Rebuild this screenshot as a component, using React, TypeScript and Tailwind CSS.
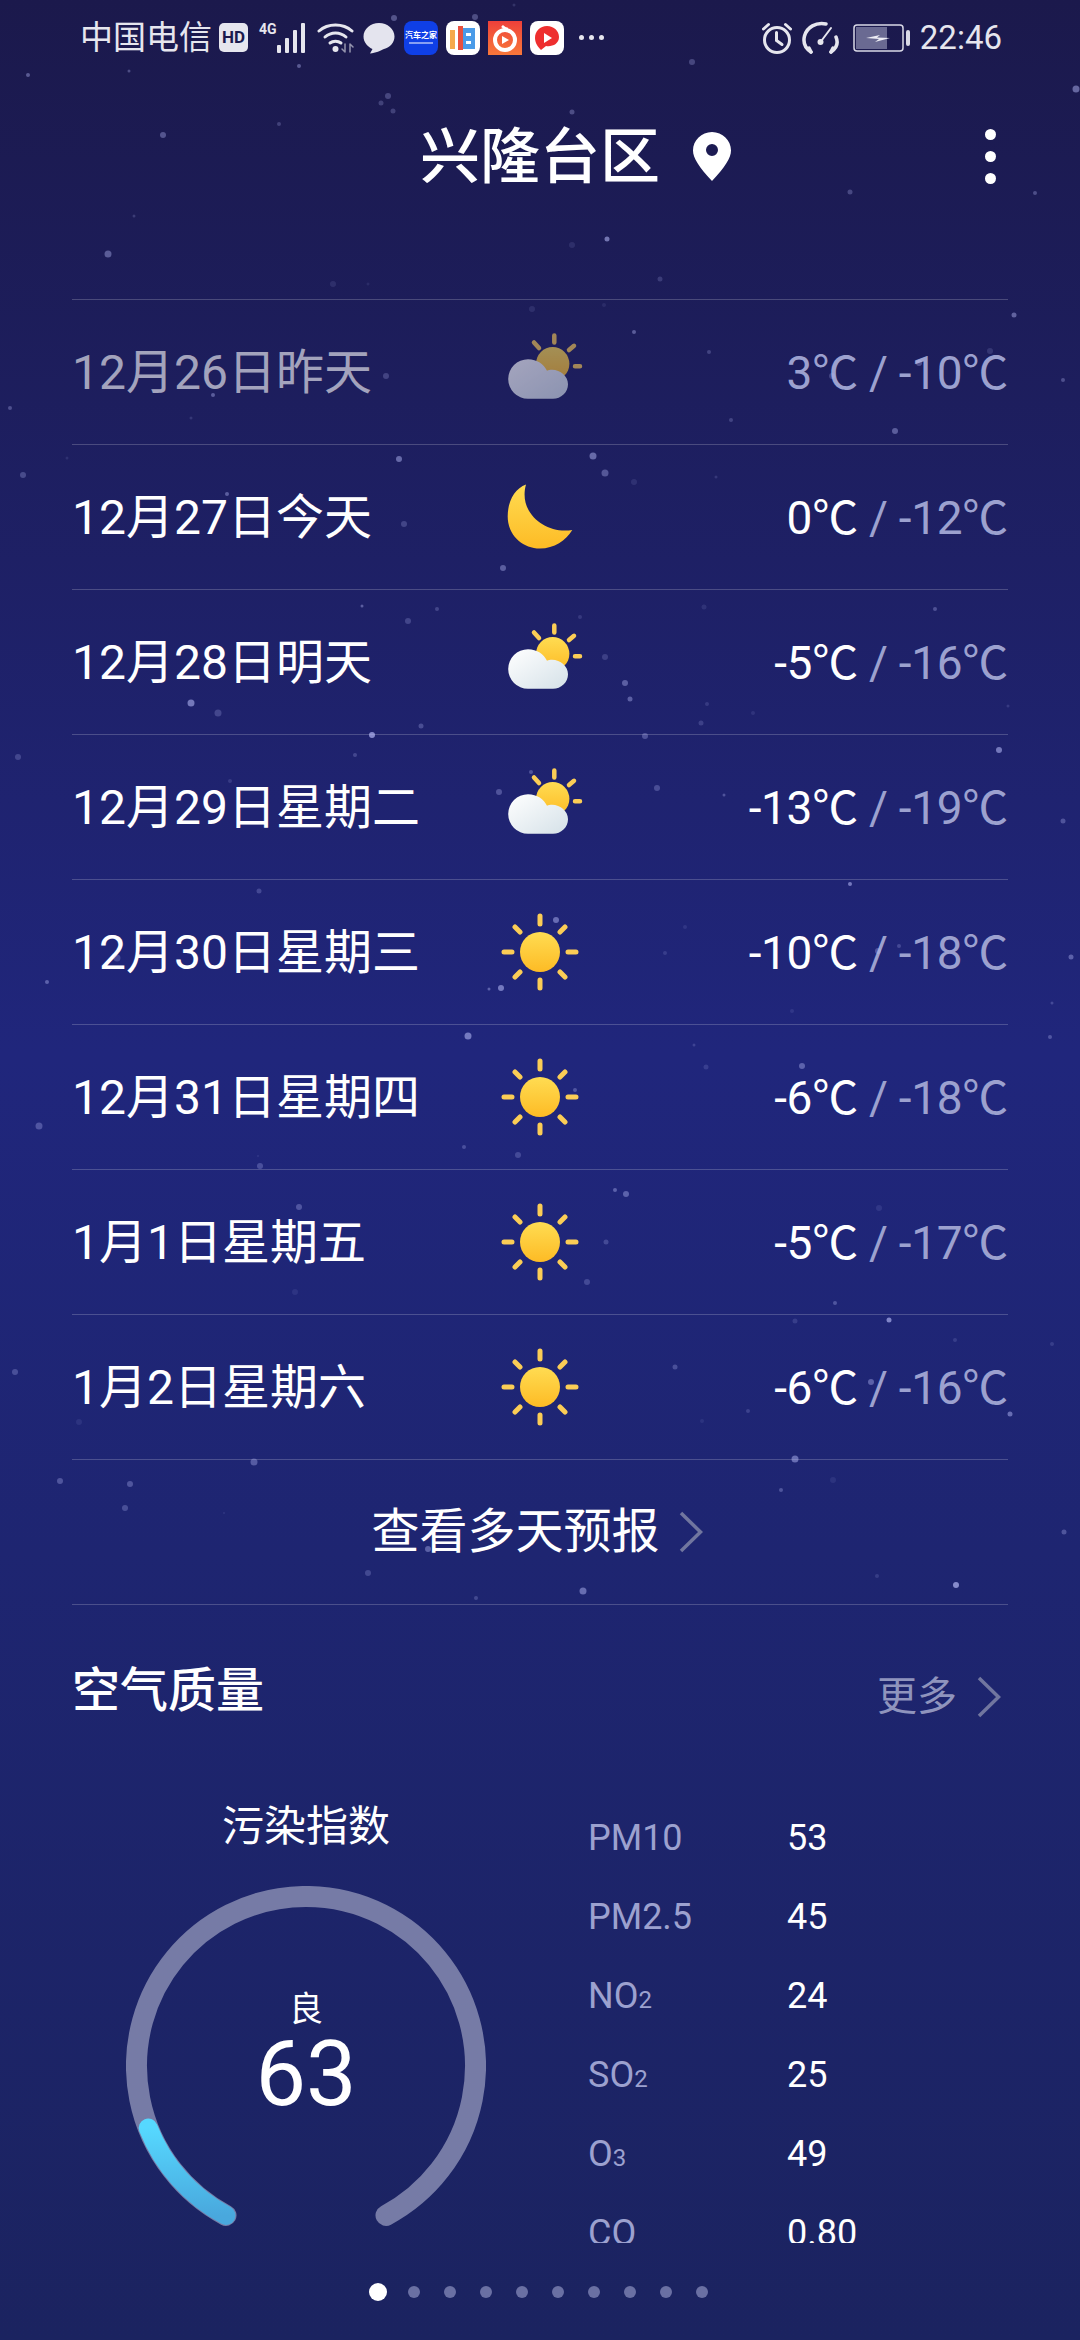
import React from "react"

// x, y, radius, opacity
const stars: [number, number, number, number][] = [
  [514,5,1.5,.2],[394,18,3,.45],[475,17,3,.4],[28,75,2,.5],[129,71,1.5,.4],[299,66,2,.5],[692,62,3,.35],[1076,89,3.5,.6],
  [388,96,3,.35],[381,103,2.5,.3],[393,111,2.5,.3],[572,112,2.5,.4],[279,124,2,.3],[163,135,3,.45],[850,192,2.5,.35],[1035,193,2,.4],
  [134,216,1.5,.25],[607,239,2.5,.7],[572,245,3,.15],[108,254,3.5,.5],[660,279,2.5,.25],[333,284,3,.15],[368,284,1.5,.12],[532,309,3,.15],
  [604,305,2,.12],[1014,315,2.5,.55],[634,332,2,.5],[709,352,2,.3],[990,351,3,.2],[386,376,3,.3],[1063,380,2,.4],[832,376,3,.3],
  [919,363,3,.4],[213,395,2,.5],[10,408,2,.4],[191,418,1.5,.2],[731,420,2,.3],[895,431,3,.5],[399,459,3,.6],[593,456,3.5,.6],
  [605,473,3.5,.45],[23,475,3,.35],[716,477,1.5,.2],[634,482,3,.15],[67,458,1.5,.15],[227,494,2,.5],[404,524,3,.3],[503,568,3,.5],
  [362,606,1.5,.5],[437,609,2,.3],[408,621,3,.3],[704,607,2.5,.15],[580,617,2,.2],[935,609,2,.4],[605,657,3,.25],[625,683,3,.5],
  [630,699,2.5,.5],[191,703,3.5,.7],[218,713,3.5,.3],[707,704,2,.2],[753,713,2,.15],[1008,706,1.5,.2],[421,726,2.5,.35],[701,723,2.5,.25],
  [372,735,3,.85],[645,736,3,.4],[18,757,3,.3],[355,755,2,.3],[999,750,3,.7],[230,781,2,.2],[531,772,2,.4],[499,792,3,.4],
  [657,788,3,.35],[724,795,1.5,.4],[1063,821,2.5,.4],[259,891,2.5,.3],[850,884,2,.7],[556,920,3,.6],[685,927,2,.15],[117,958,3.5,.3],
  [665,953,2,.2],[878,951,3,.4],[899,946,2,.3],[1071,957,2.5,.5],[47,982,2,.5],[489,989,1.5,.5],[501,988,3,.7],[1052,1003,1.5,.3],
  [792,1011,2,.15],[468,1036,3.5,.7],[1050,1037,2,.4],[694,1045,1.5,.25],[706,1067,2.5,.2],[802,1066,3,.5],[575,1090,2,.4],[39,1126,3.5,.4],
  [464,1147,2,.35],[518,1155,3,.3],[260,1166,3,.35],[258,1156,1,.15],[615,1190,2,.5],[626,1194,3,.5],[299,1207,3,.4],[879,1208,3,.15],
  [606,1242,2.5,.3],[587,1282,3,.3],[295,1292,3,.12],[835,1303,2,.4],[889,1320,2.5,.8],[795,1321,2.5,.2],[955,1340,2,.2],[1052,1344,2,.2],
  [675,1367,2.5,.35],[15,1372,3,.35],[871,1382,3,.5],[748,1411,2,.25],[1010,1414,2.5,.6],[79,1422,3,.12],[702,1421,2,.12],[254,1462,3.5,.45],
  [795,1459,3.5,.6],[60,1481,3,.4],[130,1484,3,.4],[125,1508,3,.35],[781,1490,2,.4],[833,1480,3,.12],[224,1513,1,.15],[428,1549,3,.5],
  [368,1573,3,.3],[583,1591,3.5,.6],[956,1585,3,.85],[877,1576,2,.2],[476,1598,2,.3],[1064,1532,2.5,.4],
]

type Weather = "cloudy" | "moon" | "sun"

const days: { date: string; icon: Weather; high: string; low: string; past?: boolean }[] = [
  { date: "12月26日昨天", icon: "cloudy", high: "3℃", low: "-10℃", past: true },
  { date: "12月27日今天", icon: "moon", high: "0℃", low: "-12℃" },
  { date: "12月28日明天", icon: "cloudy", high: "-5℃", low: "-16℃" },
  { date: "12月29日星期二", icon: "cloudy", high: "-13℃", low: "-19℃" },
  { date: "12月30日星期三", icon: "sun", high: "-10℃", low: "-18℃" },
  { date: "12月31日星期四", icon: "sun", high: "-6℃", low: "-18℃" },
  { date: "1月1日星期五", icon: "sun", high: "-5℃", low: "-17℃" },
  { date: "1月2日星期六", icon: "sun", high: "-6℃", low: "-16℃" },
]

const air: { name: string; sub?: string; value: string }[] = [
  { name: "PM10", value: "53" },
  { name: "PM2.5", value: "45" },
  { name: "NO", sub: "2", value: "24" },
  { name: "SO", sub: "2", value: "25" },
  { name: "O", sub: "3", value: "49" },
  { name: "CO", value: "0.80" },
]

const WeatherIcon = ({ type, id }: { type: Weather; id: string }) => (
  <svg width="100" height="100" viewBox="0 0 100 100">
    <defs>
      <linearGradient id={`sun-${id}`} x1="0" y1="0" x2="0" y2="1">
        <stop offset="0" stopColor="#ffdc52" />
        <stop offset="1" stopColor="#fdbb25" />
      </linearGradient>
      <linearGradient id={`cloud-${id}`} x1="0" y1="0" x2="1" y2="1">
        <stop offset="0" stopColor="#ffffff" />
        <stop offset="1" stopColor="#d5e1e8" />
      </linearGradient>
    </defs>
    {type === "sun" && (
      <g>
        <g stroke="#fbcd56" strokeWidth="5" strokeLinecap="round">
          <path d="M50 14v8M50 78v8M14 50h8M78 50h8M25 25l5 5M75 25l-5 5M25 75l5-5M75 75l-5-5" />
        </g>
        <circle cx="50" cy="50" r="20" fill={`url(#sun-${id})`} />
      </g>
    )}
    {type === "moon" && (
      <path
        d="M36 17.5C25 21.5 17.7 33.5 17.7 49.5C17.7 67.5 32 81.5 50 81.5C64 81.5 76 73.5 82.3 63C55 67.5 28 45.5 36 17.5Z"
        fill={`url(#sun-${id})`}
      />
    )}
    {type === "cloudy" && (
      <g>
        <g stroke="#fbcd56" strokeWidth="4.5" strokeLinecap="round">
          <path d="M64.300 13.500v7M44 20.500l5 5.500M79 28l5-4.200M85 44.200h5" />
        </g>
        <circle cx="62.700" cy="41.800" r="16.700" fill={`url(#sun-${id})`} />
        <path
          d="M38 76.800a19.800 19.800 0 0 1 0-39.600c9 0 16 5 19 11.500c1.500-.6 3-1 5-1c8.500 0 16 6.500 16 14.500c0 8-7 14.600-15 14.600z"
          fill={`url(#cloud-${id})`}
        />
      </g>
    )}
  </svg>
)

const Chevron = () => (
  <svg width="24" height="42" viewBox="0 0 24 42" fill="none" stroke="#71769f" strokeWidth="3.5">
    <path d="M2 2L21.500 21L2 40" />
  </svg>
)

const StatusLeft = () => (
  <div className="flex items-center">
    <span className="text-[33px] leading-none">中国电信</span>
    <span className="ml-[7px] flex h-[29px] w-[29px] items-center justify-center rounded-[5px] bg-[#e6e6ee] text-[17px] font-bold leading-none text-[#1b1a4d]">
      HD
    </span>
    <div className="relative ml-[11px] h-[34px] w-[49px]">
      <span className="absolute left-0 top-[1px] text-[14px] font-bold leading-none">4G</span>
      <svg className="absolute left-0 top-0" width="49" height="34" viewBox="0 0 49 34" fill="#e6e6ee">
        <rect x="18" y="24" width="4" height="8" rx="1" />
        <rect x="26" y="17" width="4" height="15" rx="1" />
        <rect x="34" y="9" width="4" height="23" rx="1" />
        <rect x="42" y="2" width="4" height="30" rx="1" />
      </svg>
    </div>
    <svg className="ml-[9px]" width="37" height="32" viewBox="0 0 37 32" fill="none" stroke="#e6e6ee" strokeWidth="3" strokeLinecap="round">
      <path d="M2 9C11 1 26 1 35 9" />
      <path d="M8 15C14 9.500 23 9.500 29 15" />
      <path d="M13 21C16 18.500 21 18.500 24 21" />
      <circle cx="18.500" cy="27" r="3" fill="#e6e6ee" stroke="none" />
      <path d="M28 22v8M28 30l-3-3" strokeWidth="1.500" opacity=".6" />
      <path d="M33 30v-8M33 22l3 3" strokeWidth="1.500" opacity=".6" />
    </svg>
    <svg className="ml-[9px]" width="32" height="32" viewBox="0 0 32 32" fill="#e4e4ee">
      <path d="M16 1C7.500 1 0.500 7 0.500 14.500C0.500 20.500 5 25 9.500 27L7 31.500C12.500 31 18 28.500 21 27C27 25.500 31.500 20.500 31.500 14.500C31.500 7 24.500 1 16 1Z" />
    </svg>
    <div className="ml-[9px] flex h-[34px] w-[34px] flex-col items-center justify-center rounded-[8px] bg-[#0f3fe6]">
      <span className="text-[8px] font-bold leading-[10px] text-white">汽车之家</span>
      <span className="mt-[1px] h-[2px] w-[24px] bg-white/50" />
    </div>
    <div className="ml-[8px] h-[34px] w-[34px] rounded-[8px] bg-white">
      <svg width="34" height="34" viewBox="0 0 34 34">
        <rect x="4" y="9" width="5" height="19" fill="#f5a94c" />
        <rect x="12" y="5" width="5" height="24" fill="#e8503f" />
        <rect x="17" y="7" width="12" height="21" fill="#4a9be8" />
        <rect x="20" y="12" width="5" height="3" fill="#fff" />
        <rect x="20" y="20" width="5" height="3" fill="#fff" />
      </svg>
    </div>
    <div className="ml-[8px] h-[34px] w-[34px] bg-gradient-to-b from-[#ee3f3a] to-[#f8773a]">
      <svg width="34" height="34" viewBox="0 0 34 34">
        <circle cx="17" cy="19" r="10" fill="none" stroke="#fff" strokeWidth="4" />
        <path d="M14 15l7 4-7 4z" fill="#fff" />
        <path d="M14 5c2 2 4 3 6 3" stroke="#fff" strokeWidth="2.500" fill="none" />
      </svg>
    </div>
    <div className="ml-[8px] h-[34px] w-[34px] rounded-[8px] bg-white">
      <svg width="34" height="34" viewBox="0 0 34 34">
        <path d="M17 5C10 5 5 10 5 17C5 22 8 26 11 29L16 25C22 26 29 23 29 16C29 10 24 5 17 5Z" fill="#ee2f2f" />
        <path d="M14 12l8 5-8 5z" fill="#fff" />
      </svg>
    </div>
    <div className="ml-[15px] flex gap-[5px]">
      <span className="h-[5px] w-[5px] rounded-full bg-[#e6e6ee]" />
      <span className="h-[5px] w-[5px] rounded-full bg-[#e6e6ee]" />
      <span className="h-[5px] w-[5px] rounded-full bg-[#e6e6ee]" />
    </div>
  </div>
)

const StatusRight = () => (
  <div className="flex items-center">
    <svg width="30" height="32" viewBox="0 0 30 32" fill="none" stroke="#e6e6ee" strokeWidth="3" strokeLinecap="round">
      <circle cx="15" cy="18" r="12.500" />
      <path d="M14.500 10.500v8l5.500 4" />
      <path d="M1.500 7l5-4.500M28.500 7l-5-4.500" />
    </svg>
    <svg className="ml-[10px]" width="38" height="34" viewBox="0 0 38 34" fill="none" stroke="#e6e6ee" strokeWidth="3.500" strokeLinecap="round">
      <path d="M9 31C3 27 1 21 2.500 15C5 6 14 1 24 3" />
      <path d="M34 16C36.500 22 35 27 29 31" />
      <path d="M29 7L20 19" strokeWidth="2" />
      <circle cx="18.500" cy="21" r="3" fill="#e6e6ee" stroke="none" />
      <path d="M9 31l-2-4M29 31l2-4" />
    </svg>
    <svg className="ml-[13px]" width="57" height="28" viewBox="0 0 57 28">
      <rect x="1" y="1" width="49" height="26" rx="3" fill="none" stroke="#d9d9e6" strokeWidth="1.500" />
      <rect x="3" y="3" width="31" height="22" fill="#6a6a92" />
      <path d="M13 14L27 11L24 13.500L37 14L22 18L26 15z" fill="#ececf4" />
      <rect x="53" y="6" width="4" height="16" rx="2" fill="#d9d9e6" />
    </svg>
    <span className="ml-[10px] text-[33px] leading-none">22:46</span>
  </div>
)

const Gauge = () => (
  <div className="relative h-[360px] w-[360px]">
    <svg width="360" height="360" viewBox="0 0 360 360" fill="none" strokeLinecap="round" strokeWidth="21">
      <defs>
        <linearGradient id="gauge-blue" x1="0" y1="0" x2="0" y2="1">
          <stop offset="0" stopColor="#56d8ff" />
          <stop offset="1" stopColor="#49a8dd" />
        </linearGradient>
      </defs>
      <path d="M100 329.400A169.500 169.500 0 1 1 260 329.400" stroke="#767ba6" />
      <path d="M100 329.400A169.500 169.500 0 0 1 22.200 242" stroke="url(#gauge-blue)" strokeWidth="19" />
    </svg>
    <div className="absolute inset-0 flex flex-col items-center pt-[104px]">
      <span className="text-[34px] leading-[39px]">良</span>
      <span className="text-[90px] leading-[92px]">63</span>
    </div>
  </div>
)

export default function App() {
  return (
    <div className="relative h-[2340px] w-[1080px] overflow-hidden bg-linear-to-b from-[#1b194c] via-[#20267c] via-45% to-[#1b2360] font-['Roboto','Noto_Sans_CJK_SC',sans-serif] text-white">
      <div className="flex h-[75px] items-center justify-between pl-[80px] pr-[78px] text-[#e6e6ee]">
        <StatusLeft />
        <StatusRight />
      </div>

      <div className="grid h-[224px] grid-cols-[1fr_240px_1fr] items-start pt-[41px]">
        <div />
        <h1 className="whitespace-nowrap text-center text-[60px] font-medium leading-[84px]">兴隆台区</h1>
        <div className="flex h-[84px] items-center justify-between pl-[32px] pr-[84px]">
          <svg width="40" height="50" viewBox="0 0 40 50" className="mb-[4px]">
            <path
              fillRule="evenodd"
              fill="#fff"
              d="M20 1C9.500 1 1 9.300 1 19.500C1 27 7 36 20 50C33 36 39 27 39 19.500C39 9.300 30.500 1 20 1ZM20 13a6 6 0 1 1 0 12a6 6 0 1 1 0-12Z"
            />
          </svg>
          <div className="mb-[4px] flex flex-col gap-[11px]">
            <span className="h-[11px] w-[11px] rounded-full bg-white" />
            <span className="h-[11px] w-[11px] rounded-full bg-white" />
            <span className="h-[11px] w-[11px] rounded-full bg-white" />
          </div>
        </div>
      </div>

      <div className="mx-[72px] border-t border-white/20">
        {days.map((day, i) => (
          <div key={day.date} className="flex h-[145px] items-center border-b border-white/20">
            <span className={`w-[418px] pt-[2px] text-[48px] leading-none ${day.past ? "text-white/60" : ""}`}>{day.date}</span>
            <div className={`w-[100px] ${day.past ? "opacity-60" : ""}`}>
              <WeatherIcon type={day.icon} id={String(i)} />
            </div>
            <span className="flex-1 pt-[2px] text-right text-[46px] leading-none tracking-[-0.3px] text-[#9ca1cf]">
              <span className={day.past ? "" : "text-white"}>{day.high}</span> / {day.low}
            </span>
          </div>
        ))}
        <div className="flex h-[145px] items-center justify-center gap-[19px] border-b border-white/20 pr-[6px]">
          <span className="text-[48px] leading-none">查看多天预报</span>
          <Chevron />
        </div>
      </div>

      <div className="mx-[72px] flex items-start justify-between pt-[56px]">
        <span className="text-[48px] font-medium leading-[60px]">空气质量</span>
        <div className="mr-[7px] mt-[15px] flex items-center gap-[20px] text-[40px] text-[#8f94bd]">
          <span className="leading-[42px]">更多</span>
          <Chevron />
        </div>
      </div>

      <div className="mt-[77px] flex items-start pl-[126px]">
        <div className="flex w-[360px] flex-col items-center">
          <span className="text-[42px] leading-[58px]">污染指数</span>
          <div className="mt-[30px]">
            <Gauge />
          </div>
        </div>
        <div className="ml-[102px] h-[445px] overflow-hidden">
          {air.map((row) => (
            <div key={row.name} className="flex h-[79px] items-center text-[36px]">
              <span className="w-[199px] text-[#9ca1cf]">
                {row.name}
                {row.sub && <span className="text-[24px]">{row.sub}</span>}
              </span>
              <span>{row.value}</span>
            </div>
          ))}
        </div>
      </div>

      <div className="mt-[37px] flex justify-center">
        {Array.from({ length: 10 }).map((_, i) => (
          <div key={i} className="flex h-[18px] w-[36px] items-center justify-center">
            <span className={i === 0 ? "h-[18px] w-[18px] rounded-full bg-white" : "h-[12px] w-[12px] rounded-full bg-[#6a70a3]"} />
          </div>
        ))}
      </div>

      <svg className="pointer-events-none absolute inset-0 opacity-80" width="1080" height="2340" viewBox="0 0 1080 2340" fill="#b8bcf8">
        {stars.map(([x, y, r, o], i) => (
          <circle key={i} cx={x} cy={y} r={r} opacity={o} />
        ))}
      </svg>
    </div>
  )
}
